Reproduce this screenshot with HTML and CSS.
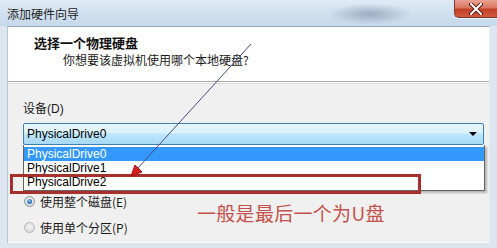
FILE: index.html
```html
<!DOCTYPE html>
<html lang="zh-CN">
<head>
<meta charset="utf-8">
<title>添加硬件向导</title>
<link rel="stylesheet" href="styles.css">
</head>
<body>
<div class="window">
  <div class="titlebar">
    <span class="title">添加硬件向导</span>
    <div class="glass-blur"></div>
    <div class="close">
      <svg width="16" height="12" viewBox="0 0 16 12"><path d="M3 1 L13 11 M13 1 L3 11" stroke="#5a1a14" stroke-width="4" stroke-linecap="round"/><path d="M3 1 L13 11 M13 1 L3 11" stroke="#ffffff" stroke-width="2" stroke-linecap="round"/></svg>
    </div>
  </div>
  <div class="frame">
    <div class="client">
      <div class="header">
        <div class="h-title">选择一个物理硬盘</div>
        <div class="h-sub">你想要该虚拟机使用哪个本地硬盘?</div>
      </div>
      <div class="content">
        <div class="label">设备(D)</div>
        <div class="combo-wrap">
          <div class="combo">
            <span>PhysicalDrive0</span>
            <span class="drop-arrow"></span>
          </div>
          <ul class="list">
            <li class="item selected">PhysicalDrive0</li>
            <li class="item">PhysicalDrive1</li>
            <li class="item">PhysicalDrive2</li>
          </ul>
        </div>
        <div class="radios">
          <div class="radio-row"><span class="radio checked"></span><span>使用整个磁盘(E)</span></div>
          <div class="radio-row"><span class="radio"></span><span>使用单个分区(P)</span></div>
        </div>
      </div>
    </div>
  </div>
  <div class="red-box"></div>
  <div class="note">一般是最后一个为U盘</div>
  <svg class="arrow" width="497" height="248" viewBox="0 0 497 248">
    <line x1="251" y1="44" x2="137" y2="169" stroke="#4a4a7c" stroke-width="1"/>
    <polygon points="131,176 135,165 142,172" fill="#d42020" stroke="#b01010" stroke-width="1"/>
  </svg>
</div>
</body>
</html>
```
FILE: styles.css
```css
html, body {
  margin: 0;
  padding: 0;
}
body {
  width: 497px;
  height: 248px;
  overflow: hidden;
  font-family: "Liberation Sans", "Noto Sans CJK SC", sans-serif;
  font-size: 12px;
  color: #1a1a1a;
}
.window {
  position: relative;
  width: 497px;
  height: 248px;
  display: flex;
  flex-direction: column;
  background: #dde6ef;
}
.titlebar {
  height: 26px;
  flex: none;
  display: flex;
  align-items: center;
  position: relative;
  background: linear-gradient(to bottom, #dfeaf5 0%, #cfdfef 60%, #c6d8ea 100%);
}
.title {
  padding-left: 7px;
  font-family: "Noto Sans CJK SC", sans-serif;
  font-size: 12px;
  color: #1e1e1e;
}
.glass-blur {
  position: absolute;
  left: 330px;
  top: 4px;
  width: 80px;
  height: 20px;
  background: radial-gradient(ellipse at center, rgba(90,110,140,0.45) 0%, rgba(120,140,165,0.2) 50%, rgba(200,215,230,0) 75%);
}
.close {
  position: absolute;
  right: 0;
  top: 0;
  width: 42px;
  height: 17px;
  border-radius: 0 0 0 5px;
  border: 1px solid #7a3a30;
  border-top: none;
  border-right: none;
  background: linear-gradient(to bottom, #e9a393 0%, #d8765f 45%, #c2412a 55%, #cf5a3e 100%);
  display: flex;
  align-items: center;
  justify-content: center;
  box-shadow: 0 1px 0 rgba(255,255,255,0.6);
}
.frame {
  flex: 1;
  display: flex;
  padding: 0 7px 5px 7px;
}
.client {
  flex: 1;
  display: flex;
  flex-direction: column;
  border-top: 1px solid #93a9c0;
  border-left: 1px solid #b8c6d4;
  border-right: 1px solid #e4ebf2;
  background: #f0f0f0;
}
.header {
  height: 55px;
  flex: none;
  background: #ffffff;
  border-bottom: 1px solid #a9a9a9;
  box-shadow: 0 1px 0 #ffffff, 0 2px 0 #dcdcdc;
  padding: 8px 0 0 26px;
  box-sizing: border-box;
  font-family: "Noto Sans CJK SC", sans-serif;
}
.h-title {
  font-weight: bold;
  font-size: 13px;
  line-height: 16px;
  color: #111;
}
.h-sub {
  margin-top: 1px;
  margin-left: 29px;
  font-size: 12px;
  line-height: 16px;
  color: #1a1a1a;
}
.content {
  flex: 1;
  padding: 20px 5px 0 15px;
  border-bottom: 1px solid #fafafa;
}
.label {
  line-height: 14px;
  margin-bottom: 7px;
}
.combo-wrap {
  position: relative;
  height: 22px;
}
.combo {
  height: 22px;
  box-sizing: border-box;
  border: 1px solid #3c7fb1;
  border-radius: 2px;
  background: linear-gradient(to bottom, #eaf6fd 0%, #d9f0fc 45%, #bee6fd 50%, #a7d9f5 100%);
  display: flex;
  align-items: center;
  justify-content: space-between;
  padding: 0 5px 0 3px;
  color: #000;
}
.drop-arrow {
  width: 0;
  height: 0;
  border-left: 4px solid transparent;
  border-right: 4px solid transparent;
  border-top: 4px solid #000;
  margin-right: 1px;
}
.list {
  position: absolute;
  top: 22px;
  left: 0;
  right: -1px;
  margin: 0;
  padding: 2px 0 1px;
  list-style: none;
  background: #ffffff;
  border: 1px solid #646464;
  border-top: none;
  box-shadow: 2px 2px 2px rgba(0,0,0,0.25);
  z-index: 2;
}
.item {
  height: 14px;
  line-height: 14px;
  padding-left: 3px;
  color: #000;
}
.item.selected {
  background: #3399ff;
  color: #ffffff;
}
.radios {
  margin-top: 48px;
  display: flex;
  flex-direction: column;
  gap: 10px;
}
.radio-row {
  display: flex;
  align-items: center;
  gap: 5px;
  height: 16px;
  font-family: "Noto Sans CJK SC", sans-serif;
  padding-left: 1px;
}
.radio {
  width: 11px;
  height: 11px;
  border-radius: 50%;
  box-sizing: border-box;
  border: 1px solid #8e8f8f;
  background: radial-gradient(circle at 50% 40%, #f6f6f6 0%, #dcdcdc 70%, #cfcfcf 100%);
  display: flex;
  align-items: center;
  justify-content: center;
}
.radio.checked::after {
  content: "";
  width: 5px;
  height: 5px;
  border-radius: 50%;
  background: radial-gradient(circle at 40% 35%, #8fc8f2 0%, #2b6fb8 60%, #1a4f8c 100%);
}
.radio:not(.checked) {
  border-color: #b5b5b5;
}
.red-box {
  position: absolute;
  left: 10px;
  top: 174px;
  width: 405px;
  height: 14px;
  border: 3px solid #a8302c;
  z-index: 3;
}
.note {
  position: absolute;
  left: 197px;
  top: 200px;
  font-family: "Noto Sans CJK SC", sans-serif;
  font-size: 19px;
  line-height: 26px;
  color: #c4504c;
  letter-spacing: 0.3px;
  z-index: 3;
}
.arrow {
  position: absolute;
  left: 0;
  top: 0;
  z-index: 4;
  pointer-events: none;
}
```
